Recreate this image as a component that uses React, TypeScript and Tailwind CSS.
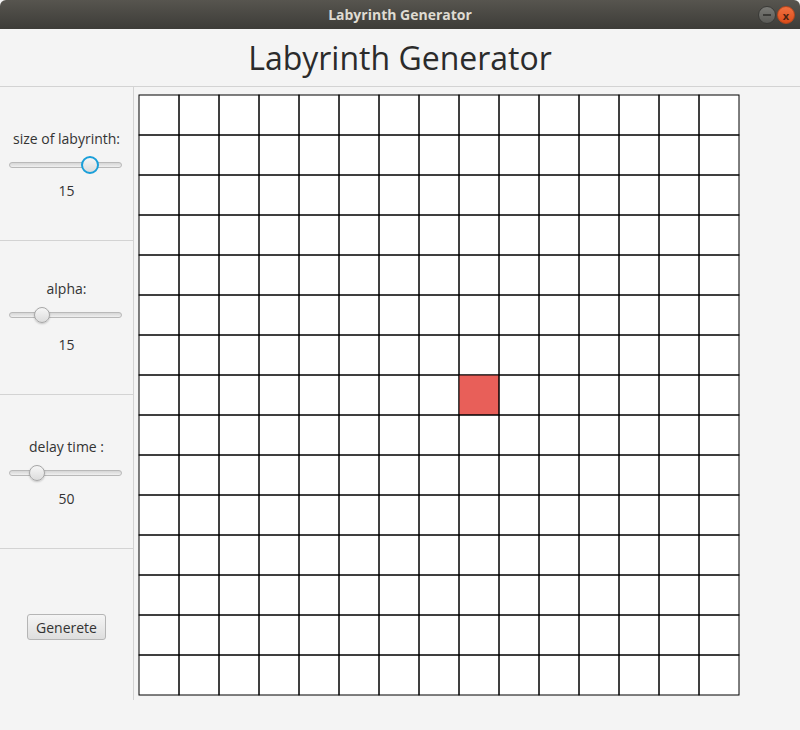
import React from 'react';

const SIZE = 15;
const CELL = 40;
const ACTIVE = { row: 7, col: 8 };

interface SliderProps {
    value: number; // 0..1 position of the thumb
    focused?: boolean;
}

function Slider({ value, focused = false }: SliderProps) {
    return (
        <div className="relative h-[18px] w-[113px]">
            <div className="absolute left-0 right-0 top-[6px] h-[6px] rounded-full border border-[#b9b9b9] bg-gradient-to-b from-[#d6d6d6] to-[#f0f0f0]" />
            <div
                className={
                    focused
                        ? 'absolute top-[0px] h-[18px] w-[18px] rounded-full border-2 border-[#1a9fd9] bg-gradient-to-b from-[#f6f6f6] to-[#dcdcdc]'
                        : 'absolute top-[1px] h-[16px] w-[16px] rounded-full border border-[#a6a6a6] bg-gradient-to-b from-[#f6f6f6] to-[#dcdcdc] shadow-[0_1px_2px_rgba(0,0,0,0.2)]'
                }
                style={{ left: `${value * 113 - (focused ? 9 : 8)}px` }}
            />
        </div>
    );
}

interface SectionProps {
    label: string;
    value: string;
    thumb: number;
    focused?: boolean;
    compact?: boolean;
}

function Section({ label, value, thumb, focused, compact = false }: SectionProps) {
    return (
        <div className="flex h-[154px] flex-col items-center border-b border-[#d3d3d3]">
            <div className={compact ? 'pt-[40px]' : 'pt-[44px]'} />
            <div className="h-4 text-[14px] leading-4 text-[#333]">{label}</div>
            <div className="mt-[9px] mr-[2px]">
                <Slider value={thumb} focused={focused} />
            </div>
            <div className={compact ? 'mt-[13px] h-4 text-[14px] leading-4 text-[#333]' : 'mt-[9px] h-4 text-[14px] leading-4 text-[#333]'}>
                {value}
            </div>
        </div>
    );
}

function Maze() {
    const cells = [];
    for (let r = 0; r < SIZE; r++) {
        for (let c = 0; c < SIZE; c++) {
            const active = r === ACTIVE.row && c === ACTIVE.col;
            cells.push(
                <rect
                    key={`${r}-${c}`}
                    x={1 + c * CELL}
                    y={1 + r * CELL}
                    width={CELL}
                    height={CELL}
                    fill={active ? '#e85f59' : 'none'}
                    stroke="#000"
                    strokeWidth={1}
                />
            );
        }
    }
    return (
        <svg width={602} height={602} className="block">
            <rect x={1} y={1} width={600} height={600} fill="#fff" />
            {cells}
        </svg>
    );
}

export default function App() {
    return (
        <div className="h-[730px] w-[800px] overflow-hidden bg-[#f4f4f4] font-['Open_Sans',sans-serif]">
            {/* Window title bar */}
            <div className="relative flex h-[29px] items-center justify-center rounded-t-[6px] bg-gradient-to-b from-[#57554f] to-[#3d3c38]">
                <span className="text-[14px] font-bold text-[#dfdbd2]">Labyrinth Generator</span>
                <div className="absolute right-[5px] top-[6px] flex gap-[1px]">
                    <div className="flex h-[18px] w-[18px] items-center justify-center rounded-full border border-[#3a3a37] bg-gradient-to-b from-[#7a7a76] to-[#5a5a56]">
                        <div className="h-[2px] w-[8px] bg-[#3b3b38]" />
                    </div>
                    <div className="flex h-[18px] w-[18px] items-center justify-center rounded-full border border-[#b8461c] bg-gradient-to-b from-[#f0703f] to-[#dc4c18] text-[11px] leading-none font-bold text-[#4a2312]">
                        x
                    </div>
                </div>
            </div>

            {/* Header */}
            <div className="flex h-[58px] items-center justify-center border-b border-[#d3d3d3]">
                <h1 className="text-[32px] leading-none text-[#2b2b2b]">Labyrinth Generator</h1>
            </div>

            <div className="flex">
                {/* Controls */}
                <div className="h-[613px] w-[134px] border-r border-[#d3d3d3]">
                    <Section label="size of labyrinth:" value="15" thumb={0.72} focused />
                    <Section label="alpha:" value="15" thumb={0.29} compact />
                    <Section label="delay time :" value="50" thumb={0.25} />
                    <div className="flex justify-center pt-[65px]">
                        <button className="h-[26px] w-[79px] rounded-[3px] border border-[#b5b5b5] bg-gradient-to-b from-[#f5f5f5] to-[#dedede] text-[14px] text-[#333]">
                            Generete
                        </button>
                    </div>
                </div>

                {/* Labyrinth */}
                <div className="pl-[4px] pt-[7px]">
                    <Maze />
                </div>
            </div>
        </div>
    );
}
